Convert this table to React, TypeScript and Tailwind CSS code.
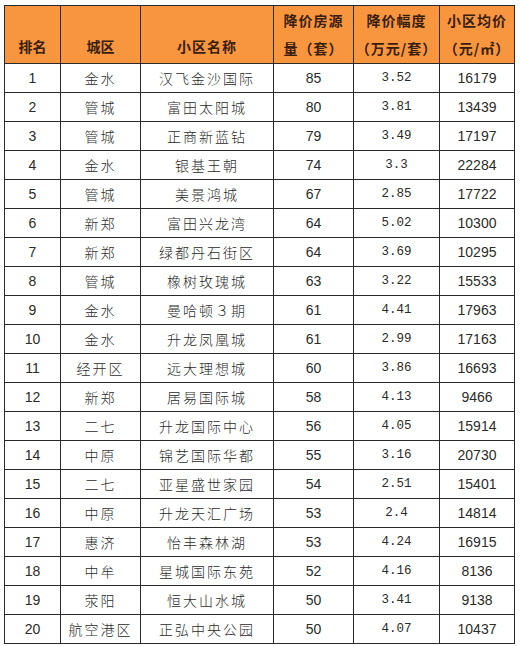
const rows: [number, string, string, number, string, number][] = [
  [1, '金水', '汉飞金沙国际', 85, '3.52', 16179],
  [2, '管城', '富田太阳城', 80, '3.81', 13439],
  [3, '管城', '正商新蓝钻', 79, '3.49', 17197],
  [4, '金水', '银基王朝', 74, '3.3', 22284],
  [5, '管城', '美景鸿城', 67, '2.85', 17722],
  [6, '新郑', '富田兴龙湾', 64, '5.02', 10300],
  [7, '新郑', '绿都丹石街区', 64, '3.69', 10295],
  [8, '管城', '橡树玫瑰城', 63, '3.22', 15533],
  [9, '金水', '曼哈顿３期', 61, '4.41', 17963],
  [10, '金水', '升龙凤凰城', 61, '2.99', 17163],
  [11, '经开区', '远大理想城', 60, '3.86', 16693],
  [12, '新郑', '居易国际城', 58, '4.13', 9466],
  [13, '二七', '升龙国际中心', 56, '4.05', 15914],
  [14, '中原', '锦艺国际华都', 55, '3.16', 20730],
  [15, '二七', '亚星盛世家园', 54, '2.51', 15401],
  [16, '中原', '升龙天汇广场', 53, '2.4', 14814],
  [17, '惠济', '怡丰森林湖', 53, '4.24', 16915],
  [18, '中牟', '星城国际东苑', 52, '4.16', 8136],
  [19, '荥阳', '恒大山水城', 50, '3.41', 9138],
  [20, '航空港区', '正弘中央公园', 50, '4.07', 10437],
];

const cjk = "font-['Noto_Sans_CJK_SC',sans-serif]";
const num = "font-['Liberation_Sans',sans-serif]";

export default function App() {
  return (
    <div className="w-[520px] h-[646px] bg-white pl-[4px] pt-[5px]">
      <table className="border-collapse table-fixed w-[510px] text-[#2b2b2b]">
        <colgroup>
          <col className="w-[56px]" />
          <col className="w-[80px]" />
          <col className="w-[133px]" />
          <col className="w-[80px]" />
          <col className="w-[86px]" />
          <col className="w-[75px]" />
        </colgroup>
        <thead>
          <tr className={`h-[57px] bg-[#f7963f] text-[#3a200c] text-[14px] font-bold ${cjk}`}>
            <th className="border border-[#2a2a2a] align-bottom pb-[3px] leading-[28px]">排名</th>
            <th className="border border-[#2a2a2a] align-bottom pb-[3px] leading-[28px]">城区</th>
            <th className="border border-[#2a2a2a] align-bottom pb-[3px] leading-[28px] tracking-[1px]">小区名称</th>
            <th className="border border-[#2a2a2a] align-bottom pb-[1px] leading-[28px] tracking-[1px]">
              降价房源<br />量（套）
            </th>
            <th className="border border-[#2a2a2a] align-bottom pb-[1px] leading-[28px] tracking-[1px]">
              降价幅度<br />（万元/套）
            </th>
            <th className="border border-[#2a2a2a] align-bottom pb-[1px] leading-[28px] tracking-[1px]">
              小区均价<br />（元/㎡）
            </th>
          </tr>
        </thead>
        <tbody>
          {rows.map(([rank, area, name, count, drop, price]) => (
            <tr key={rank} className="h-[29px] text-center">
              <td className={`border border-[#2a2a2a] p-0 text-[14px] ${num}`}>{rank}</td>
              <td className={`border border-[#2a2a2a] p-0 text-[14px] font-light tracking-[2px] ${cjk}`}>{area}</td>
              <td className={`border border-[#2a2a2a] p-0 text-[14px] font-light tracking-[2px] ${cjk}`}>{name}</td>
              <td className={`border border-[#2a2a2a] p-0 text-[14px] ${num}`}>{count}</td>
              <td className="border border-[#2a2a2a] p-0 text-[12.5px] font-['Liberation_Mono',monospace]">{drop}</td>
              <td className={`border border-[#2a2a2a] p-0 text-[14px] ${num}`}>{price}</td>
            </tr>
          ))}
        </tbody>
      </table>
    </div>
  );
}
